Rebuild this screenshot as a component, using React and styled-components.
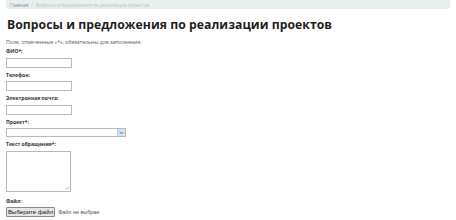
import React from "react";
import styled, { createGlobalStyle } from "styled-components";

const Global = createGlobalStyle`
  html, body { margin: 0; padding: 0; background: #fff; }
  body { font-family: "Open Sans", "Liberation Sans", sans-serif; color: #222; }
`;

const Page = styled.div`
  width: 456px;
  height: 220px;
  padding: 0 6px;
  box-sizing: border-box;
  overflow: hidden;
`;

const Crumbs = styled.div`
  height: 9px;
  background: #e9efee;
  display: flex;
  align-items: center;
  gap: 3px;
  padding: 0 4px;
  font-size: 4.6px;
  color: #b8c2c4;
  border-radius: 0 0 2px 2px;
`;

const CrumbLink = styled.span`
  color: #7d93a8;
`;

const Title = styled.h1`
  margin: 6px 0 0 1px;
  font-size: 12.2px;
  line-height: 20px;
  font-weight: 700;
  color: #1e1e1e;
  letter-spacing: 0.05px;
  white-space: nowrap;
`;

const Note = styled.p`
  margin: 3px 0 0 0;
  font-size: 5.2px;
  line-height: 8px;
  color: #555;
`;

const Form = styled.form`
  display: flex;
  flex-direction: column;
  margin-top: 2px;
`;

const Field = styled.div`
  display: flex;
  flex-direction: column;
  align-items: flex-start;
  margin-bottom: ${(p) => p.$mb || 4}px;
`;

const Label = styled.label`
  font-size: 5px;
  line-height: 7px;
  font-weight: 700;
  color: #333;
  margin-bottom: 2.5px;
`;

const Input = styled.div`
  width: ${(p) => p.$w}px;
  height: ${(p) => p.$h}px;
  box-sizing: border-box;
  border: 1px solid #b9b9b9;
  background: #fff;
  position: relative;
`;

const Arrow = styled.div`
  position: absolute;
  right: 0;
  top: 0;
  bottom: 0;
  width: 7px;
  background: #d6e2f5;
  border-left: 1px solid #c1cfe6;
  display: flex;
  align-items: center;
  justify-content: center;
`;

const Grip = styled.svg`
  position: absolute;
  right: 1px;
  bottom: 1px;
`;

const FileRow = styled.div`
  display: flex;
  align-items: center;
  gap: 3px;
`;

const FileButton = styled.div`
  height: 10px;
  box-sizing: border-box;
  border: 1px solid #8a8a8a;
  border-radius: 1px;
  background: #e6e6e6;
  font-family: "Liberation Sans", sans-serif;
  font-size: 6.1px;
  line-height: 8px;
  padding: 0 1px;
  color: #111;
`;

const FileText = styled.span`
  font-family: "Liberation Sans", sans-serif;
  font-size: 5.4px;
  color: #555;
`;

export default function App() {
  return (
    <>
      <Global />
      <Page>
        <Crumbs>
          <CrumbLink>Главная</CrumbLink>
          <span>/</span>
          <span>Вопросы и предложения по реализации проектов</span>
        </Crumbs>
        <Title>Вопросы и предложения по реализации проектов</Title>
        <Note>Поля, отмеченные «*», обязательны для заполнения.</Note>
        <Form>
          <Field>
            <Label>ФИО*:</Label>
            <Input $w={66} $h={10} />
          </Field>
          <Field>
            <Label>Телефон:</Label>
            <Input $w={66} $h={10} />
          </Field>
          <Field>
            <Label>Электронная почта:</Label>
            <Input $w={66} $h={10} />
          </Field>
          <Field>
            <Label>Проект*:</Label>
            <Input $w={120} $h={9}>
              <Arrow>
                <svg width="5" height="4" viewBox="0 0 5 4">
                  <path d="M0.8 1 L2.5 2.8 L4.2 1" fill="none" stroke="#4a6fb0" strokeWidth="0.9" />
                </svg>
              </Arrow>
            </Input>
          </Field>
          <Field $mb={6}>
            <Label>Текст обращения*:</Label>
            <Input $w={65} $h={41}>
              <Grip width="4" height="4" viewBox="0 0 4 4">
                <path d="M0.5 3.8 L3.8 0.5 M2 3.8 L3.8 2" stroke="#999" strokeWidth="0.6" />
              </Grip>
            </Input>
          </Field>
          <Field>
            <Label>Файл:</Label>
            <FileRow>
              <FileButton>Выберите файл</FileButton>
              <FileText>Файл не выбран</FileText>
            </FileRow>
          </Field>
        </Form>
      </Page>
    </>
  );
}
